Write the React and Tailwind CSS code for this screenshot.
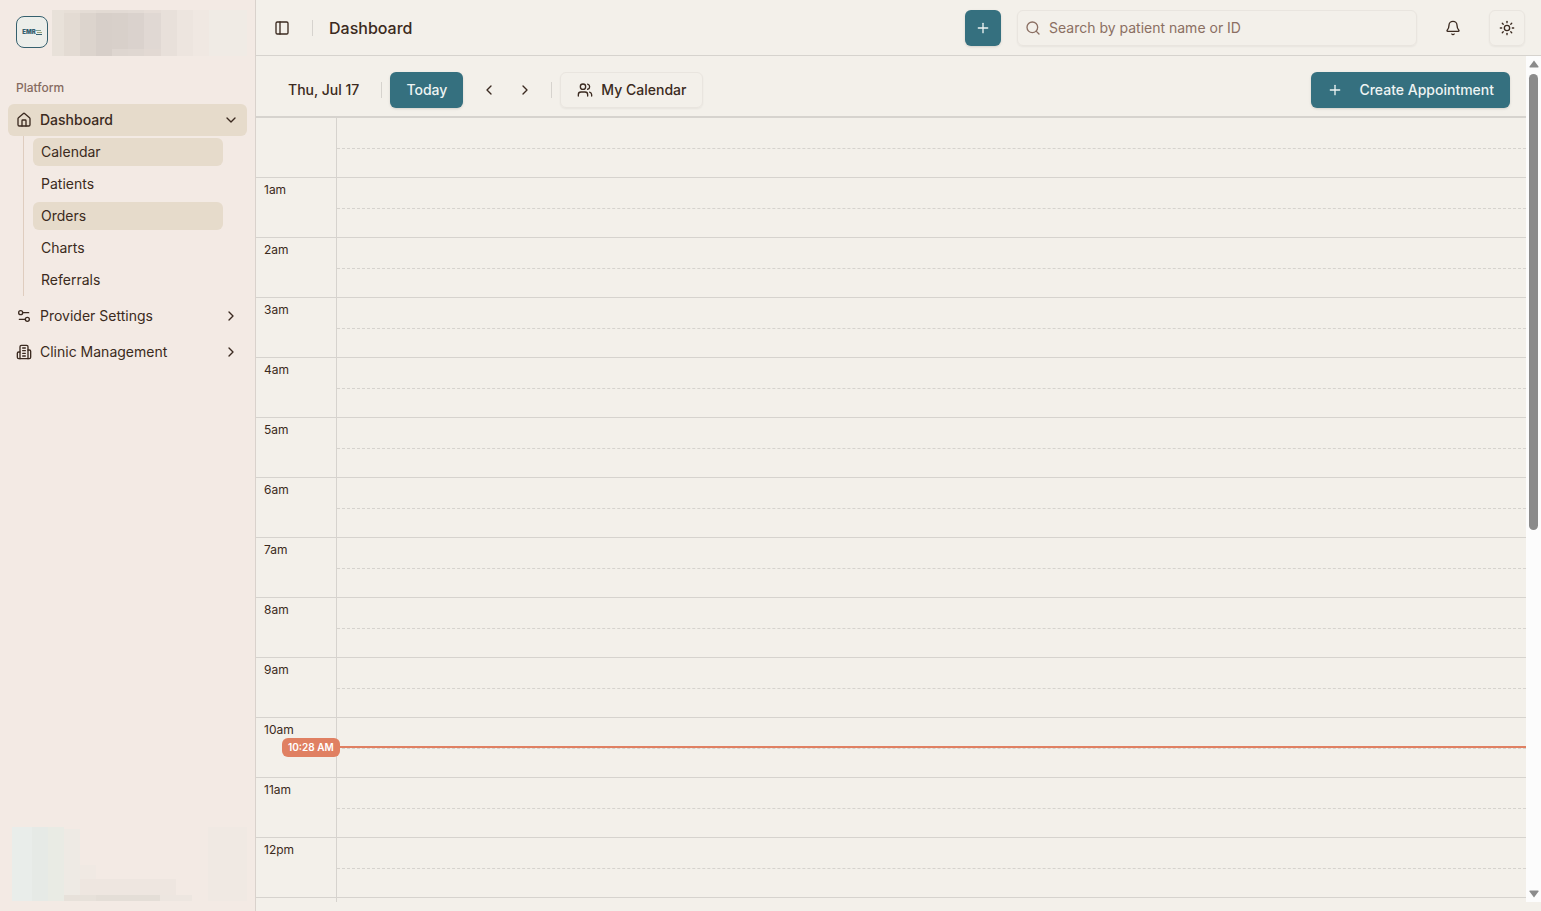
import { useState } from 'react'
import {
  Bell,
  ChevronDown,
  ChevronLeft,
  ChevronRight,
  House,
  PanelLeft,
  Plus,
  Search,
  Settings2,
  Sun,
  Users,
} from 'lucide-react'

const links = [
  { name: 'Calendar', active: true },
  { name: 'Patients' },
  { name: 'Orders', active: true },
  { name: 'Charts' },
  { name: 'Referrals' },
]

const hours = ['', '1am', '2am', '3am', '4am', '5am', '6am', '7am', '8am', '9am', '10am', '11am', '12pm', '']

function Logo() {
  return (
    <a href="#" aria-label="Home" className="flex size-8 shrink-0 items-center justify-center rounded-lg border border-[#35606e] bg-[#eceeea]">
      <span className="text-[6px] leading-none font-black text-[#35606e]">EMR</span>
      <svg width="6" height="5" viewBox="0 0 6 5" fill="none" strokeWidth="1" aria-hidden="true">
        <path d="M0 .5H5" stroke="#7fa08f" />
        <path d="M1 2.5H6" stroke="#9aa57c" />
        <path d="M0 4.5H6" stroke="#35606e" />
      </svg>
    </a>
  )
}

function ClinicIcon() {
  return (
    <svg width="16" height="16" viewBox="0 0 24 24" fill="none" stroke="currentColor" strokeWidth="2" strokeLinecap="round" strokeLinejoin="round" aria-hidden="true">
      <path d="M6 22V4a2 2 0 0 1 2-2h8a2 2 0 0 1 2 2v18Z" />
      <path d="M6 12H4a2 2 0 0 0-2 2v6a2 2 0 0 0 2 2h2" />
      <path d="M18 9h2a2 2 0 0 1 2 2v9a2 2 0 0 1-2 2h-2" />
      <path d="M10 6h4" />
      <path d="M10 10h4" />
      <path d="M10 14h4" />
      <path d="M10 18h4" />
    </svg>
  )
}

// redacted clinic name
function ClinicName() {
  const cols = [
    [0, 12, '#e8e1d9'],
    [12, 16, '#e3dbd3'],
    [28, 16, '#dcd4cd'],
    [44, 16, '#d7cfc9'],
    [60, 16, '#d8d0ca'],
    [76, 16, '#dad2cd'],
    [92, 17, '#e0d8d3'],
    [109, 16, '#e8e0da'],
    [125, 16, '#ede5df'],
    [141, 16, '#f0e8e2'],
    [157, 38, '#f0ebe5'],
  ]
  return (
    <svg viewBox="0 0 195 46" className="h-[46px] min-w-0 flex-1" preserveAspectRatio="none" aria-hidden="true">
      {cols.map(([x, w, fill]) => (
        <rect key={x} x={x} width={w} height="46" fill={fill} />
      ))}
      <rect x="12" y="0" width="97" height="3" fill="#e9e1da" opacity="0.6" />
      <rect x="60" y="39" width="49" height="7" fill="#e2dad4" opacity="0.6" />
    </svg>
  )
}

// redacted account card
function Account() {
  return (
    <svg viewBox="0 0 235 76" className="h-[76px] w-full" preserveAspectRatio="none" aria-hidden="true">
      <rect x="0" y="0" width="20" height="74" fill="#e9edea" />
      <rect x="20" y="0" width="16" height="74" fill="#e6eae6" />
      <rect x="36" y="0" width="16" height="74" fill="#e9ebe4" />
      <rect x="52" y="2" width="16" height="72" fill="#eeeae4" />
      <rect x="68" y="38" width="16" height="36" fill="#f0e9e3" />
      <rect x="68" y="52" width="96" height="17" fill="#eee6e0" />
      <rect x="52" y="68" width="32" height="6" fill="#e7e1da" />
      <rect x="84" y="68" width="64" height="6" fill="#e4ded7" />
      <rect x="148" y="68" width="32" height="6" fill="#ede6e0" />
      <rect x="196" y="0" width="39" height="74" fill="#f0e9e3" />
    </svg>
  )
}

function Sidebar() {
  return (
    <aside className="flex w-64 shrink-0 flex-col border-r border-[#d9d2cc] bg-[#f3eae4]">
      <div className="flex items-end gap-1 pt-[10px] pr-2 pl-4">
        <div className="pb-2">
          <Logo />
        </div>
        <ClinicName />
      </div>
      <nav className="flex flex-1 flex-col gap-1 px-2 pt-4">
        <h2 className="flex h-7 items-end px-2 pb-1 text-xs font-medium text-[#866a5f]">Platform</h2>
        <div>
          <button className="flex h-8 w-full items-center gap-2 rounded-md bg-[#e6dbcb] px-2 text-sm font-medium">
            <House size={16} />
            <span className="flex-1 text-left">Dashboard</span>
            <ChevronDown size={16} />
          </button>
          <ul className="mr-6 ml-[15px] flex flex-col gap-1 border-l border-[#dfcdbf] py-0.5 pl-[9px]">
            {links.map((link) => (
              <li key={link.name}>
                <a
                  href="#"
                  className={`flex h-7 items-center rounded-md px-2 text-sm ${link.active ? 'bg-[#e6dbcb]' : ''}`}
                >
                  {link.name}
                </a>
              </li>
            ))}
          </ul>
        </div>
        <button className="flex h-8 w-full items-center gap-2 rounded-md px-2 text-sm">
          <Settings2 size={16} />
          <span className="flex-1 text-left">Provider Settings</span>
          <ChevronRight size={16} />
        </button>
        <button className="flex h-8 w-full items-center gap-2 rounded-md px-2 text-sm">
          <ClinicIcon />
          <span className="flex-1 text-left">Clinic Management</span>
          <ChevronRight size={16} />
        </button>
      </nav>
      <div className="pr-2 pb-2 pl-3">
        <Account />
      </div>
    </aside>
  )
}

function Header() {
  const [query, setQuery] = useState('')

  return (
    <header className="flex h-14 shrink-0 items-center justify-between border-b border-[#d6d3ce] pr-4 pl-3">
      <div className="flex items-center gap-4">
        <button aria-label="Toggle sidebar" className="flex size-7 items-center justify-center">
          <PanelLeft size={16} />
        </button>
        <div className="h-4 w-px bg-[#d6d3ce]" />
        <h1 className="text-base font-medium">Dashboard</h1>
      </div>
      <div className="flex items-center gap-[18px]">
        <div className="flex items-center gap-4">
          <button aria-label="Add" className="flex size-9 items-center justify-center rounded-md bg-[#35707f] text-[#eef4f3] shadow-sm">
            <Plus size={16} />
          </button>
          <label className="flex h-9 w-[400px] items-center gap-2 rounded-md border border-[#e9e5df] px-[7px] text-[#8b6f62] shadow-xs">
            <Search size={16} />
            <input
              type="text"
              aria-label="Search by patient name or ID"
              placeholder="Search by patient name or ID"
              value={query}
              onChange={(e) => setQuery(e.target.value)}
              className="min-w-0 flex-1 bg-transparent text-sm outline-none placeholder:text-[#8b6f62]"
            />
          </label>
        </div>
        <button aria-label="Notifications" className="flex size-9 items-center justify-center">
          <Bell size={16} />
        </button>
        <button aria-label="Toggle theme" className="flex size-9 items-center justify-center rounded-md border border-[#e9e5df] shadow-xs">
          <Sun size={16} />
        </button>
      </div>
    </header>
  )
}

function Toolbar() {
  return (
    <div className="flex shrink-0 items-center justify-between border-b-2 border-[#d6d3ce] px-4 pt-4 pb-2 text-sm font-medium">
      <div className="flex items-center gap-2">
        <button className="h-9 pr-[14px] pl-4">Thu, Jul 17</button>
        <div className="h-4 w-px bg-[#d6d3ce]" />
        <button className="h-9 rounded-md bg-[#35707f] px-4 text-[#eef4f3] shadow-sm">Today</button>
        <div className="flex">
          <button aria-label="Previous day" className="flex size-9 items-center justify-center">
            <ChevronLeft size={16} />
          </button>
          <button aria-label="Next day" className="flex size-9 items-center justify-center">
            <ChevronRight size={16} />
          </button>
        </div>
        <div className="h-4 w-px bg-[#d6d3ce]" />
        <button className="flex h-9 items-center gap-2 rounded-md border border-[#e9e5df] px-4 shadow-xs">
          <Users size={16} />
          My Calendar
        </button>
      </div>
      <button className="flex h-9 items-center gap-4 rounded-md bg-[#35707f] px-4 text-[#eef4f3] shadow-sm">
        <Plus size={16} />
        Create Appointment
      </button>
    </div>
  )
}

function DayGrid() {
  return (
    <div className="relative min-h-0 flex-1 overflow-hidden">
      {hours.map((hour, i) => (
        <div key={i} className="flex h-[60px]">
          <div className="w-20 border-b border-[#d6d3ce] px-2 pt-1 text-xs">{hour}</div>
          <div className="flex-1 border-b border-l border-[#d6d3ce] pt-[30px]">
            <div className="border-t border-dashed border-[#d6d3ce]" />
          </div>
        </div>
      ))}
      {/* current time */}
      <div className="absolute top-[620px] right-0 left-[26px] flex items-start">
        <span className="rounded-md bg-[#e08062] px-[6px] py-[2px] text-[10px] leading-[15px] font-semibold text-white">
          10:28 AM
        </span>
        <div className="mt-2 h-0.5 flex-1 bg-[#e08062]" />
      </div>
    </div>
  )
}

function ScrollTrack() {
  return (
    <div className="flex w-[15px] shrink-0 flex-col items-center bg-[#fcfcfc] py-1" aria-hidden="true">
      <svg width="10" height="8" viewBox="0 0 10 8" fill="#8b8b8b">
        <path d="M5 0.5 9.5 6.5Q9.8 7.5 9 7.5H1Q.2 7.5.5 6.5Z" />
      </svg>
      <div className="my-[6px] flex min-h-0 w-[9px] flex-1 flex-col">
        <div className="h-[56.3%] rounded-full bg-[#8b8b8b]" />
      </div>
      <svg width="10" height="8" viewBox="0 0 10 8" fill="#8b8b8b">
        <path d="M5 7.5.5 1.5Q.2.5 1 .5H9Q9.8.5 9.5 1.5Z" />
      </svg>
    </div>
  )
}

export default function App() {
  return (
    <div className="flex h-screen bg-[#f3f0ea] font-['Inter','Liberation_Sans',sans-serif] text-[#3b2a20]">
      <Sidebar />
      <main className="flex min-w-0 flex-1 flex-col pb-[9px]">
        <Header />
        <div className="flex min-h-0 flex-1">
          <section className="flex min-w-0 flex-1 flex-col">
            <Toolbar />
            <DayGrid />
          </section>
          <ScrollTrack />
        </div>
      </main>
    </div>
  )
}
